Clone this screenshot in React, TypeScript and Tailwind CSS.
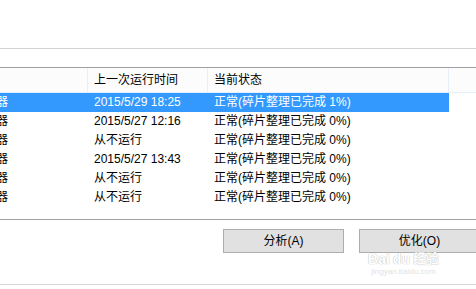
const rows = [
  { time: '2015/5/29 18:25', status: '正常(碎片整理已完成 1%)', selected: true },
  { time: '2015/5/27 12:16', status: '正常(碎片整理已完成 0%)' },
  { time: '从不运行', status: '正常(碎片整理已完成 0%)' },
  { time: '2015/5/27 13:43', status: '正常(碎片整理已完成 0%)' },
  { time: '从不运行', status: '正常(碎片整理已完成 0%)' },
  { time: '从不运行', status: '正常(碎片整理已完成 0%)' },
];

export default function App() {
  return (
    <div
      className="relative w-[476px] h-[289px] overflow-hidden bg-white text-[12px] text-black"
      style={{ fontFamily: '"Liberation Sans", "Noto Sans CJK SC", sans-serif' }}
    >
      {/* top area */}
      <div className="h-[48px]" />
      <div className="h-px bg-[#d3d3d3]" />
      <div className="h-[18px]" />

      {/* drive list */}
      <div className="border-t border-[#a0a0a0]">
        {/* header */}
        <div className="flex h-[25px] bg-[#fcfcfc] border-b border-[#e5eefa] leading-[24px]">
          <div className="w-[88px] shrink-0 border-r border-[#e5eefa]" />
          <div className="w-[120px] shrink-0 border-r border-[#e5eefa] pl-[6px]">上一次运行时间</div>
          <div className="w-[241px] shrink-0 border-r border-[#e5eefa] pl-[6px]">当前状态</div>
          <div className="flex-1" />
        </div>

        {/* rows */}
        {rows.map((r, i) => (
          <div
            key={i}
            className={`flex h-[19px] w-[449px] leading-[19px] whitespace-nowrap ${
              r.selected ? 'bg-[#3399ff] text-white' : ''
            }`}
          >
            <div className="w-[88px] shrink-0 overflow-hidden">
              <span className="block -ml-[52px]">硬盘驱动器</span>
            </div>
            <div className="w-[120px] shrink-0 pl-[6px]">{r.time}</div>
            <div className="flex-1 pl-[6px]">{r.status}</div>
          </div>
        ))}
        <div className="h-[12px]" />
      </div>

      {/* buttons */}
      <div className="border-t border-[#a0a0a0] pt-[9px] h-[65px]">
        <div className="flex gap-[15px] ml-[223px]">
          <button className="w-[121px] h-[24px] shrink-0 bg-[#e1e1e1] border border-[#adadad] leading-[22px]">
            分析(A)
          </button>
          <button className="w-[121px] h-[24px] shrink-0 bg-[#e1e1e1] border border-[#adadad] leading-[22px]">
            优化(O)
          </button>
        </div>
      </div>
      <div className="h-px bg-[#d6d6d6]" />

      {/* watermark */}
      <div className="absolute left-[360px] top-[253px] w-[87px] flex flex-col items-center pointer-events-none select-none">
        <div className="flex items-end gap-[3px] text-[14px] font-bold leading-[12px] text-white [text-shadow:0_0_1px_#c0c0c0,0_0_1px_#c0c0c0]">
          <span>Bai</span>
          <span>du</span>
          <span className="text-[13px]">经验</span>
        </div>
        <div className="text-[8px] leading-[10px] text-[#e2e2e2] mt-[2px]">jingyan.baidu.com</div>
      </div>
    </div>
  );
}
